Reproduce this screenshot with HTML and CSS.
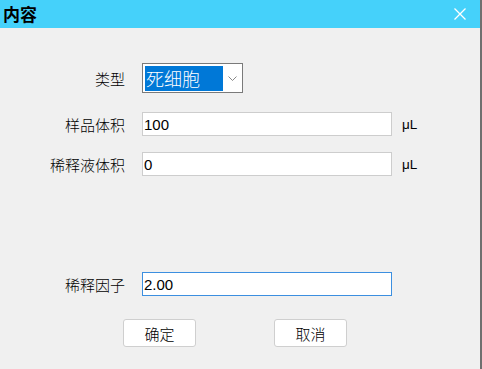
FILE: index.html
```html
<!DOCTYPE html>
<html>
<head>
  <meta charset="UTF-8">
  <title>内容</title>
  <link rel="stylesheet" href="styles.css">
</head>
<body>
  <div class="window">
    <div class="titlebar">
      <span class="title">内容</span>
      <svg class="close" width="12" height="12" viewBox="0 0 12 12">
        <path d="M0.5 0.5 L11.5 11.5 M11.5 0.5 L0.5 11.5" stroke="#fff" stroke-width="1.3" fill="none"/>
      </svg>
    </div>

    <div class="content">
      <div class="row row-type">
        <label>类型</label>
        <div class="select">
          <span class="selected">死细胞</span>
          <svg class="chevron" width="9" height="5" viewBox="0 0 9 5">
            <path d="M0.5 0.5 L4.5 4.5 L8.5 0.5" stroke="#7a7a7a" stroke-width="0.9" fill="none"/>
          </svg>
        </div>
      </div>

      <div class="row row-sample">
        <label for="sample">样品体积</label>
        <input id="sample" type="text" value="100">
        <span class="unit">μL</span>
      </div>

      <div class="row row-diluent">
        <label for="diluent">稀释液体积</label>
        <input id="diluent" type="text" value="0">
        <span class="unit">μL</span>
      </div>

      <div class="row row-factor">
        <label for="factor">稀释因子</label>
        <input id="factor" class="focused" type="text" value="2.00">
      </div>

      <div class="buttons">
        <button type="button">确定</button>
        <button type="button">取消</button>
      </div>
    </div>
  </div>
</body>
</html>
```

FILE: styles.css
```css
/* Dialog window */
html, body {
  margin: 0;
  padding: 0;
  background: #f0f0f0;
}
body {
  font-family: "Liberation Sans", "Noto Sans CJK SC", sans-serif;
  width: 482px;
  height: 369px;
  overflow: hidden;
}
.window {
  width: 480px;
  height: 369px;
  border-right: 2px solid #6f6f6f;
  background: #f0f0f0;
}
.titlebar {
  height: 28px;
  background: #45d1fa;
  display: flex;
  align-items: center;
  justify-content: space-between;
  padding: 0 14px 0 3px;
}
.title {
  font-family: "Noto Sans CJK SC", sans-serif;
  font-size: 17px;
  font-weight: bold;
  color: #000;
  line-height: 28px;
}
.close {
  display: block;
}

.content {
  padding-top: 35px;
}
.row {
  display: flex;
  align-items: center;
}
.row label {
  width: 125px;
  margin-right: 17px;
  text-align: right;
  font-family: "Noto Sans CJK SC", sans-serif;
  font-size: 15px;
  font-weight: 300;
  color: #000;
}
.row-sample { margin-top: 19px; }
.row-diluent { margin-top: 16px; }
.row-factor { margin-top: 96px; }

.select {
  box-sizing: border-box;
  width: 101px;
  height: 30px;
  border: 1px solid #7a7a7a;
  background: #fff;
  display: flex;
  align-items: center;
  padding: 2px 5px 1px 2px;
}
.selected {
  width: 78px;
  height: 25px;
  background: #0078d7;
  color: #fff;
  font-family: "Noto Sans CJK SC", sans-serif;
  font-size: 18px;
  font-weight: 300;
  line-height: 25px;
  padding-left: 1px;
  box-sizing: border-box;
  white-space: nowrap;
  overflow: hidden;
}
.chevron {
  margin-left: auto;
  display: block;
}

input {
  box-sizing: border-box;
  width: 250px;
  height: 24px;
  margin: 0;
  border: 1px solid #cdcdcd;
  background: #fff;
  padding: 0 1px;
  font-family: "Liberation Sans", sans-serif;
  font-size: 15px;
  color: #000;
  outline: none;
}
input.focused {
  border-color: #3c8fe0;
}
.unit {
  margin-left: 10px;
  font-family: "Liberation Sans", sans-serif;
  font-size: 13.5px;
  color: #000;
}

.buttons {
  display: flex;
  gap: 78px;
  padding-left: 123px;
  margin-top: 23px;
}
.buttons button {
  box-sizing: border-box;
  width: 73px;
  height: 28px;
  margin: 0;
  background: #fff;
  border: 1px solid #cfcfcf;
  border-radius: 3px;
  font-family: "Noto Sans CJK SC", sans-serif;
  font-size: 15px;
  font-weight: 300;
  color: #000;
  padding: 0;
}
```
